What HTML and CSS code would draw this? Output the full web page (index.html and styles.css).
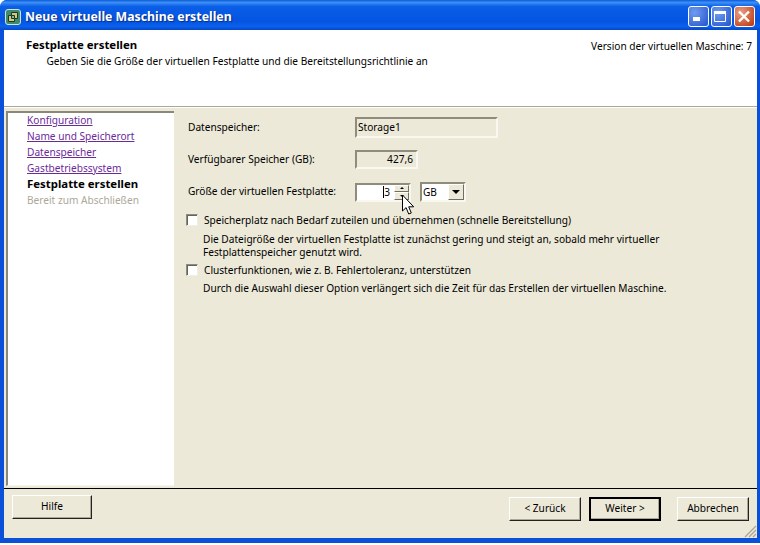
FILE: index.html
```html
<!DOCTYPE html>
<html lang="de">
<head>
<meta charset="utf-8">
<title>Neue virtuelle Maschine erstellen</title>
<link rel="stylesheet" href="styles.css">
</head>
<body>
<div class="window">
  <div class="titlebar">
    <svg class="app-icon" width="16" height="16" viewBox="0 0 16 16">
      <rect x="0.5" y="0.5" width="15" height="15" rx="2.5" fill="#3f8a68" stroke="#cfe4d8"/>
      <path d="M6.5 3.5h6v6h-3v3h-6v-6h3z" fill="#d9c878" stroke="#173a30"/>
      <path d="M6.5 6.5h3v3h-3z" fill="#7fb898" stroke="#173a30"/>
    </svg>
    <span class="title">Neue virtuelle Maschine erstellen</span>
    <div class="controls">
      <div class="ctl ctl-blue"><svg width="21" height="19" viewBox="0 0 21 19"><rect x="5" y="10" width="7" height="4" fill="#fff"/></svg></div>
      <div class="ctl ctl-blue"><svg width="21" height="19" viewBox="0 0 21 19"><path d="M3.5 4.5h11v10h-11z" fill="none" stroke="#fff"/><rect x="3" y="4" width="12" height="3" fill="#fff"/></svg></div>
      <div class="ctl ctl-red"><svg width="21" height="19" viewBox="0 0 21 19"><path d="M5 4.5l10 10M15 4.5l-10 10" stroke="#fff" stroke-width="2.4"/></svg></div>
    </div>
  </div>
  <div class="frame">
    <header class="head">
      <div class="head-text">
        <h1>Festplatte erstellen</h1>
        <p>Geben Sie die Größe der virtuellen Festplatte und die Bereitstellungsrichtlinie an</p>
      </div>
      <div class="version">Version der virtuellen Maschine: 7</div>
    </header>
    <div class="body">
      <nav class="steps">
        <a href="#">Konfiguration</a>
        <a href="#">Name und Speicherort</a>
        <a href="#">Datenspeicher</a>
        <a href="#">Gastbetriebssystem</a>
        <span class="current">Festplatte erstellen</span>
        <span class="future">Bereit zum Abschließen</span>
      </nav>
      <main class="form">
        <div class="row row-store">
          <label>Datenspeicher:</label>
          <div class="field field-store">Storage1</div>
        </div>
        <div class="row row-free">
          <label>Verfügbarer Speicher (GB):</label>
          <div class="field field-free">427,6</div>
        </div>
        <div class="row row-size">
          <label>Größe der virtuellen Festplatte:</label>
          <div class="spinner">
            <span class="spin-val"><span class="digit">3</span></span>
            <div class="spin-btns">
              <div class="spin-btn"><i class="tri-up"></i></div>
              <div class="spin-btn"><i class="tri-down"></i></div>
            </div>
          </div>
          <div class="combo"><span>GB</span><div class="combo-btn"><i class="tri-down big"></i></div></div>
        </div>
        <div class="check check-a"><i class="box"></i><span>Speicherplatz nach Bedarf zuteilen und übernehmen (schnelle Bereitstellung)</span></div>
        <p class="note note-a">Die Dateigröße der virtuellen Festplatte ist zunächst gering und steigt an, sobald mehr virtueller<br>Festplattenspeicher genutzt wird.</p>
        <div class="check check-b"><i class="box"></i><span>Clusterfunktionen, wie z. B. Fehlertoleranz, unterstützen</span></div>
        <p class="note note-b">Durch die Auswahl dieser Option verlängert sich die Zeit für das Erstellen der virtuellen Maschine.</p>
      </main>
    </div>
    <footer class="foot">
      <button class="btn btn-help">Hilfe</button>
      <div class="nav-btns">
        <button class="btn">&lt; Zurück</button>
        <button class="btn btn-default">Weiter &gt;</button>
        <button class="btn btn-cancel">Abbrechen</button>
      </div>
    </footer>
    <svg class="grip" width="14" height="14" viewBox="0 0 14 14"><path d="M13 2L2 13M13 6L6 13M13 10L10 13" stroke="#a8a594" stroke-width="1.2"/></svg>
  </div>
  <svg class="cursor" width="14" height="22" viewBox="0 0 14 22"><path d="M1.5 1v16l3.6-3.4 2.6 6.4 2.6-1-2.6-6.2h5z" fill="#fff" stroke="#000" stroke-width="1"/></svg>
</div>
</body>
</html>
```
FILE: styles.css
```css
html, body { margin: 0; padding: 0; background: #fff; }
body { width: 760px; height: 545px; overflow: hidden; font-family: "Noto Sans", "DejaVu Sans", sans-serif; font-size: 10.15px; color: #000; }
.window { position: relative; width: 760px; height: 543px; display: flex; flex-direction: column; background: #0a50d8; border-radius: 7px 7px 0 0; overflow: hidden; }
.titlebar { height: 30px; flex: none; display: flex; align-items: center; padding: 3px 5px 0 5px; box-sizing: border-box; background: linear-gradient(180deg, #0a5ad8 0%, #3d90f5 8%, #0a5ee6 22%, #0554e2 70%, #0a60ec 88%, #0448c8 100%); }
.app-icon { flex: none; margin-right: 4px; }
.title { flex: 1; color: #fff; font: bold 12.3px "Noto Sans", "DejaVu Sans", sans-serif; text-shadow: 1px 1px 1px #0a2c80; }
.controls { display: flex; gap: 2px; }
.ctl { width: 19px; height: 19px; border: 1px solid #fff; border-radius: 3px; overflow: hidden; }
.ctl svg { display: block; margin-left: -1px; }
.ctl-blue { background: radial-gradient(circle at 30% 30%, #6f9cf0, #2a5ad0 90%); }
.ctl-red { background: radial-gradient(circle at 30% 30%, #e8a088, #c03c14 90%); }
.frame { position: relative; flex: 1; margin: 0 3px 5px 4px; display: flex; flex-direction: column; background: #ece9d8; min-height: 0; }
.head { height: 77px; flex: none; background: #fff; display: flex; justify-content: space-between; box-sizing: border-box; padding: 8px 5px 0 22px; border-bottom: 1px solid #aca899; }
.head h1 { margin: 0; font-size: 11.4px; font-weight: bold; line-height: 14px; }
.head p { margin: 2px 0 0 20.5px; line-height: 15px; }
.version { line-height: 14px; padding: 1px 0 0; }
.body { flex: 1; display: flex; min-height: 0; padding: 3px 0 2px 2px; border-top: 1px solid #fff; }
.steps { width: 168px; box-sizing: border-box; flex: none; background: #fff; border-top: 2px solid #8a8878; border-left: 2px solid #8a8878; border-bottom: 1px solid #f6f5ee; padding: 0 0 0 19px; display: flex; flex-direction: column; }
.steps a, .steps span { height: 16px; line-height: 15px; white-space: nowrap; }
.steps a { color: #6a2a9a; text-decoration: underline; }
.steps .current { font-weight: bold; font-size: 11.4px; line-height: 13px; }
.future { color: #aca899; }
.form { flex: 1; padding: 6px 0 0 14px; }
.row { display: flex; align-items: center; }
.row label { width: 167px; flex: none; padding-bottom: 2px; }
.field { box-sizing: border-box; border: 2px solid; border-color: #8e8c7c #f8f7f0 #f8f7f0 #8e8c7c; background: #ece9d8; padding: 0 0 0 1px; }
.field-store { width: 143px; height: 21px; line-height: 16px; }
.field-free { width: 63px; height: 19px; line-height: 15px; text-align: right; padding-right: 3px; }
.row-free { margin-top: 12px; }
.row-size { margin-top: 13px; }
.spinner { box-sizing: border-box; width: 56px; height: 19px; display: flex; background: #fff; border: 2px solid; border-color: #8e8c7c #f8f7f0 #f8f7f0 #8e8c7c; }
.spin-val { flex: 1; text-align: right; line-height: 15px; padding-right: 4px; }
.digit { border-left: 1px solid #000; display: inline-block; height: 12px; line-height: 12px; }
.spin-btns { width: 15px; flex: none; display: flex; flex-direction: column; }
.spin-btn { flex: 1; background: #ece9d8; border: 1px solid; border-color: #fff #716f64 #716f64 #fff; display: flex; align-items: center; justify-content: center; }
.tri-up { width: 0; height: 0; border: 2px solid transparent; border-top: 0; border-bottom: 2px solid #000; }
.tri-down { width: 0; height: 0; border: 2px solid transparent; border-bottom: 0; border-top: 2px solid #000; }
.tri-down.big { border-width: 4px 4px 0; border-top-color: #000; border-left-color: transparent; border-right-color: transparent; }
.combo { box-sizing: border-box; width: 46px; height: 20px; margin-left: 9px; display: flex; background: #fff; border: 2px solid; border-color: #8e8c7c #f8f7f0 #f8f7f0 #8e8c7c; }
.combo span { flex: 1; line-height: 16px; padding-left: 1px; }
.combo-btn { width: 16px; flex: none; box-sizing: border-box; background: #ece9d8; border: 1px solid; border-color: #fff #716f64 #716f64 #fff; display: flex; align-items: center; justify-content: center; }
.check { display: flex; align-items: center; margin-left: -2px; height: 14px; }
.check span { margin-left: 6px; }
.check-a { margin-top: 11px; }
.check-b { margin-top: 4px; }
.box { width: 12px; height: 12px; flex: none; box-sizing: border-box; background: #fff; border: 1px solid; border-color: #8e8c7c #f0efe6 #f0efe6 #8e8c7c; box-shadow: inset 1px 1px 0 #66645a; }
.note { margin: 0 0 0 15px; line-height: 13px; }
.note-a { margin-top: 6px; }
.note-b { margin-top: 5px; }
.foot { height: 50px; flex: none; box-sizing: border-box; border-top: 1px solid #000; padding: 6px 8px 0 8px; display: flex; justify-content: space-between; }
.btn { font: inherit; height: 24px; width: 80px; background: #ece9d8; padding: 0 0 3px; border: 1px solid; border-color: #fff #222 #222 #fff; box-shadow: inset -1px -1px 0 #aca899; color: #000; }
.nav-btns { display: flex; margin-top: 2px; }
.nav-btns .btn { width: 72px; margin-left: 8px; }
.nav-btns .btn-cancel { margin-left: 16px; }
.btn-default { border: 2px solid #000; box-shadow: inset -1px -1px 0 #aca899; }
.grip { position: absolute; right: 0; bottom: 0; }
.cursor { position: absolute; left: 401px; top: 194px; }
```
